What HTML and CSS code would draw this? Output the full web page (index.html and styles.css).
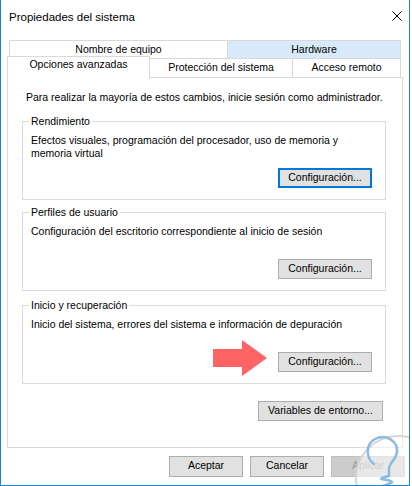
FILE: index.html
```html
<!DOCTYPE html>
<html lang="es">
<head>
  <meta charset="UTF-8">
  <title>Propiedades del sistema</title>
  <link rel="stylesheet" href="styles.css">
</head>
<body>
  <div class="window">
    <div class="titlebar">
      <span class="title">Propiedades del sistema</span>
      <svg class="close" width="10" height="10" viewBox="0 0 10 10">
        <path d="M0.5 0.5 L9.5 9.5 M9.5 0.5 L0.5 9.5" stroke="#000" stroke-width="1"/>
      </svg>
    </div>

    <!-- tab strip: back row, then the row with the active tab -->
    <div class="tab-row tab-row-back">
      <div class="tab tab-name">Nombre de equipo</div>
      <div class="tab tab-hardware">Hardware</div>
    </div>
    <div class="tab-row tab-row-front">
      <div class="tab tab-selected">Opciones avanzadas</div>
      <div class="tab tab-protect">Protección del sistema</div>
      <div class="tab tab-remote">Acceso remoto</div>
    </div>

    <div class="panel">
      <p class="intro">Para realizar la mayoría de estos cambios, inicie sesión como administrador.</p>

      <fieldset class="group">
        <legend>Rendimiento</legend>
        <p>Efectos visuales, programación del procesador, uso de memoria y memoria virtual</p>
        <div class="btn-row"><button class="btn btn-config btn-default">Configuración...</button></div>
      </fieldset>

      <fieldset class="group">
        <legend>Perfiles de usuario</legend>
        <p>Configuración del escritorio correspondiente al inicio de sesión</p>
        <div class="btn-row"><button class="btn btn-config">Configuración...</button></div>
      </fieldset>

      <fieldset class="group group-last">
        <legend>Inicio y recuperación</legend>
        <p>Inicio del sistema, errores del sistema e información de depuración</p>
        <div class="btn-row"><button class="btn btn-config">Configuración...</button></div>
      </fieldset>

      <div class="env-row"><button class="btn btn-env">Variables de entorno...</button></div>
    </div>

    <div class="footer">
      <button class="btn btn-dialog">Aceptar</button>
      <button class="btn btn-dialog">Cancelar</button>
      <button class="btn btn-dialog" disabled>Aplicar</button>
    </div>

    <!-- annotation arrow pointing at the startup settings button -->
    <svg class="arrow" width="54" height="37" viewBox="0 0 54 37">
      <path d="M0 9 H29 V0 L54 18 L29 36 V27 H0 Z" fill="#ff6464"/>
    </svg>

    <!-- watermark in the corner -->
    <svg class="watermark" width="62" height="56" viewBox="0 0 62 56">
      <circle cx="48" cy="48" r="42" fill="#fff" fill-opacity="0.55" stroke="#d6d6d6" stroke-width="2"/>
      <path d="M24 34 C16 28 15 14 25 9 C35 4 48 10 47 22 C46 30 40 32 39 38 L39 46 C36 47 32 47 31 49 C36 50 41 50 42 52 C40 54 35 55 33 56"
            fill="none" stroke="#8dbbe0" stroke-width="2.5" stroke-linecap="round" stroke-linejoin="round"/>
    </svg>
  </div>
</body>
</html>
```

FILE: styles.css
```css
* {
  box-sizing: border-box;
}

body {
  margin: 0;
  background: #fff;
  font-family: "Liberation Sans", Arial, sans-serif;
  font-size: 10.5px;
  line-height: 13px;
  color: #000;
}

.window {
  position: relative;
  width: 410px;
  height: 486px;
  border: 1px solid #1883d7;
  border-top: 0;
  background: #fff;
  overflow: hidden;
}

.titlebar {
  height: 40px;
  display: flex;
  justify-content: space-between;
  align-items: flex-start;
  padding: 10px 7px 0 8px;
}

.title {
  font-size: 11.5px;
  line-height: 14px;
}

.close {
  margin-top: 1px;
}

/* Tabs */
.tab-row {
  display: flex;
  align-items: flex-start;
}

.tab-row-back {
  margin-left: 8px;
}

.tab-row-front {
  margin-left: 6px;
}

.tab {
  border: 1px solid #d9d9d9;
  border-bottom: 0;
  text-align: center;
  white-space: nowrap;
  background: #fff;
}

.tab-row-back .tab {
  height: 18px;
  padding-top: 2px;
}

.tab-name {
  width: 219px;
}

.tab-hardware {
  width: 174px;
  margin-left: -1px;
  background: #d8eaf9;
}

.tab-selected {
  position: relative;
  z-index: 1;
  width: 143px;
  height: 22px;
  margin-top: -2px;
  margin-bottom: -1px;
  padding-top: 1px;
}

.tab-protect,
.tab-remote {
  height: 19px;
  margin-left: -1px;
  padding-top: 2px;
}

.tab-protect {
  width: 144px;
}

.tab-remote {
  width: 109px;
}

/* Page body */
.panel {
  margin-left: 6px;
  width: 396px;
  height: 371px;
  border: 1px solid #d9d9d9;
  padding: 13px 16px 0 14px;
}

.intro {
  margin: 0 0 0 4px;
}

.group {
  display: flex;
  flex-direction: column;
  height: 85px;
  min-width: 0;
  margin: 11px 0 0;
  padding: 6px 13px 11px 8px;
  border: 1px solid #dcdcdc;
}

.group + .group {
  margin-top: 6px;
}

.group-last {
  margin-top: 8px !important;
}

.group legend {
  padding: 0 2px;
  margin-left: -2px;
}

.group p {
  margin: 0;
}

.btn-row {
  margin-top: auto;
  display: flex;
  justify-content: flex-end;
}

.btn {
  font: inherit;
  color: #000;
  height: 20px;
  padding: 0 0 2px;
  border: 1px solid #adadad;
  background: #e1e1e1;
  white-space: nowrap;
}

.btn-config {
  width: 94px;
}

.btn-default {
  border: 2px solid #0078d7;
}

.env-row {
  display: flex;
  justify-content: flex-end;
  margin: 17px 3px 0 0;
}

.btn-env {
  width: 125px;
}

.footer {
  display: flex;
  justify-content: flex-end;
  gap: 7px;
  padding: 8px 4px 0 0;
}

.btn-dialog {
  width: 74px;
  height: 21px;
}

.btn-dialog:disabled {
  background: #cccccc;
  border-color: #bfbfbf;
  color: #9a9a9a;
}

.arrow {
  position: absolute;
  left: 212px;
  top: 340px;
}

.watermark {
  position: absolute;
  left: 349px;
  top: 430px;
}
```
